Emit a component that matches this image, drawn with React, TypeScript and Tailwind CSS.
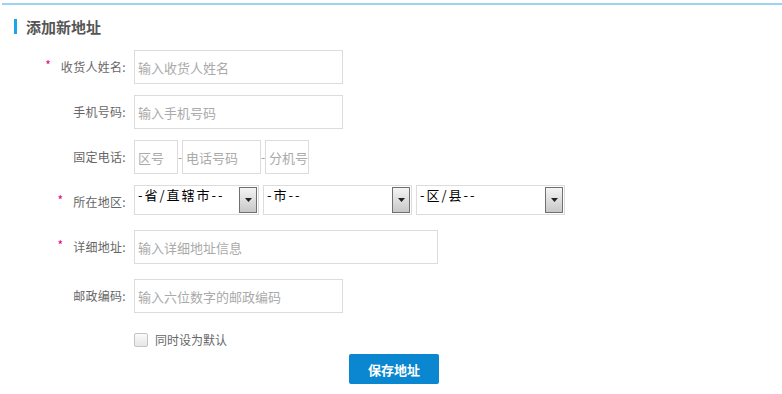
import React from 'react';

const font = { fontFamily: '"Noto Sans CJK SC", "Liberation Sans", sans-serif' };

const Label: React.FC<{ text: string; required?: boolean }> = ({ text, required }) => (
  <div className="w-[126px] flex justify-end items-center text-[12px] text-[#666] leading-none">
    {required && <span className="text-[#e4007f] text-[12px] mr-[10px] relative top-[-2px]">*</span>}
    <span className="tracking-[0.3px]">{text}:</span>
  </div>
);

const TextBox: React.FC<{ placeholder: string; width: string }> = ({ placeholder, width }) => (
  <div className={`${width} h-[34px] border border-[#dcdcdc] flex items-center pl-[3px] text-[13px] text-[#aaa] leading-none`}>
    {placeholder}
  </div>
);

const FakeSelect: React.FC<{ text: string; width: string }> = ({ text, width }) => (
  <div className={`${width} h-[30px] border border-[#dcdcdc] flex items-start justify-between pl-[3px] pr-[1px] pt-[1px]`}>
    <span className="text-[13px] text-black leading-[16px] tracking-[2px]">{text}</span>
    <div className="w-[18px] h-[26px] border border-[#707070] bg-gradient-to-b from-[#f4f4f4] to-[#c8c8c8] flex items-center justify-center">
      <svg width="7" height="4" viewBox="0 0 7 4">
        <path d="M0 0h7L3.5 4z" fill="#222" />
      </svg>
    </div>
  </div>
);

export default function App() {
  return (
    <div className="w-[782px] h-[394px] bg-white overflow-hidden" style={font}>
      <div className="pt-[3px] pl-[2px]">
        <div className="h-[2px] bg-[#9ad3f3]" />
      </div>

      <div className="flex items-center mt-[14px] pl-[14px] h-[15px]">
        <div className="w-[3px] h-[15px] bg-[#1ea4e9]" />
        <h2 className="ml-[9px] text-[15px] font-bold text-[#555] leading-none">添加新地址</h2>
      </div>

      <div className="mt-[16px] flex flex-col">
        <div className="flex items-center h-[34px]">
          <Label text="收货人姓名" required />
          <div className="ml-[8px]">
            <TextBox placeholder="输入收货人姓名" width="w-[209px]" />
          </div>
        </div>

        <div className="flex items-center h-[34px] mt-[11px]">
          <Label text="手机号码" />
          <div className="ml-[8px]">
            <TextBox placeholder="输入手机号码" width="w-[209px]" />
          </div>
        </div>

        <div className="flex items-center h-[34px] mt-[11px]">
          <Label text="固定电话" />
          <div className="ml-[8px] flex items-center">
            <TextBox placeholder="区号" width="w-[44px]" />
            <span className="w-[4px] text-center text-[12px] text-[#999]">-</span>
            <TextBox placeholder="电话号码" width="w-[79px]" />
            <span className="w-[4px] text-center text-[12px] text-[#999]">-</span>
            <TextBox placeholder="分机号" width="w-[44px]" />
          </div>
        </div>

        <div className="flex items-center h-[34px] mt-[11px]">
          <Label text="所在地区" required />
          <div className="ml-[8px] flex items-center gap-[4px] -mt-[4px]">
            <FakeSelect text="-省/直辖市--" width="w-[125px]" />
            <FakeSelect text="-市--" width="w-[149px]" />
            <FakeSelect text="-区/县--" width="w-[149px]" />
          </div>
        </div>

        <div className="flex items-center h-[34px] mt-[11px]">
          <Label text="详细地址" required />
          <div className="ml-[8px]">
            <TextBox placeholder="输入详细地址信息" width="w-[304px]" />
          </div>
        </div>

        <div className="flex items-center h-[34px] mt-[15px]">
          <Label text="邮政编码" />
          <div className="ml-[8px]">
            <TextBox placeholder="输入六位数字的邮政编码" width="w-[209px]" />
          </div>
        </div>

        <div className="flex items-center h-[14px] mt-[20px] pl-[134px]">
          <div className="w-[14px] h-[14px] border border-[#c4c4c4] rounded-[2px] bg-gradient-to-b from-[#fafafa] to-[#e6e6e6]" />
          <span className="ml-[7px] text-[12px] text-[#666] leading-none">同时设为默认</span>
        </div>

        <div className="mt-[7px] pl-[349px]">
          <button className="w-[90px] h-[30px] bg-[#0a87d0] rounded-[2px] text-white text-[13px] font-bold leading-none">
            保存地址
          </button>
        </div>
      </div>
    </div>
  );
}
